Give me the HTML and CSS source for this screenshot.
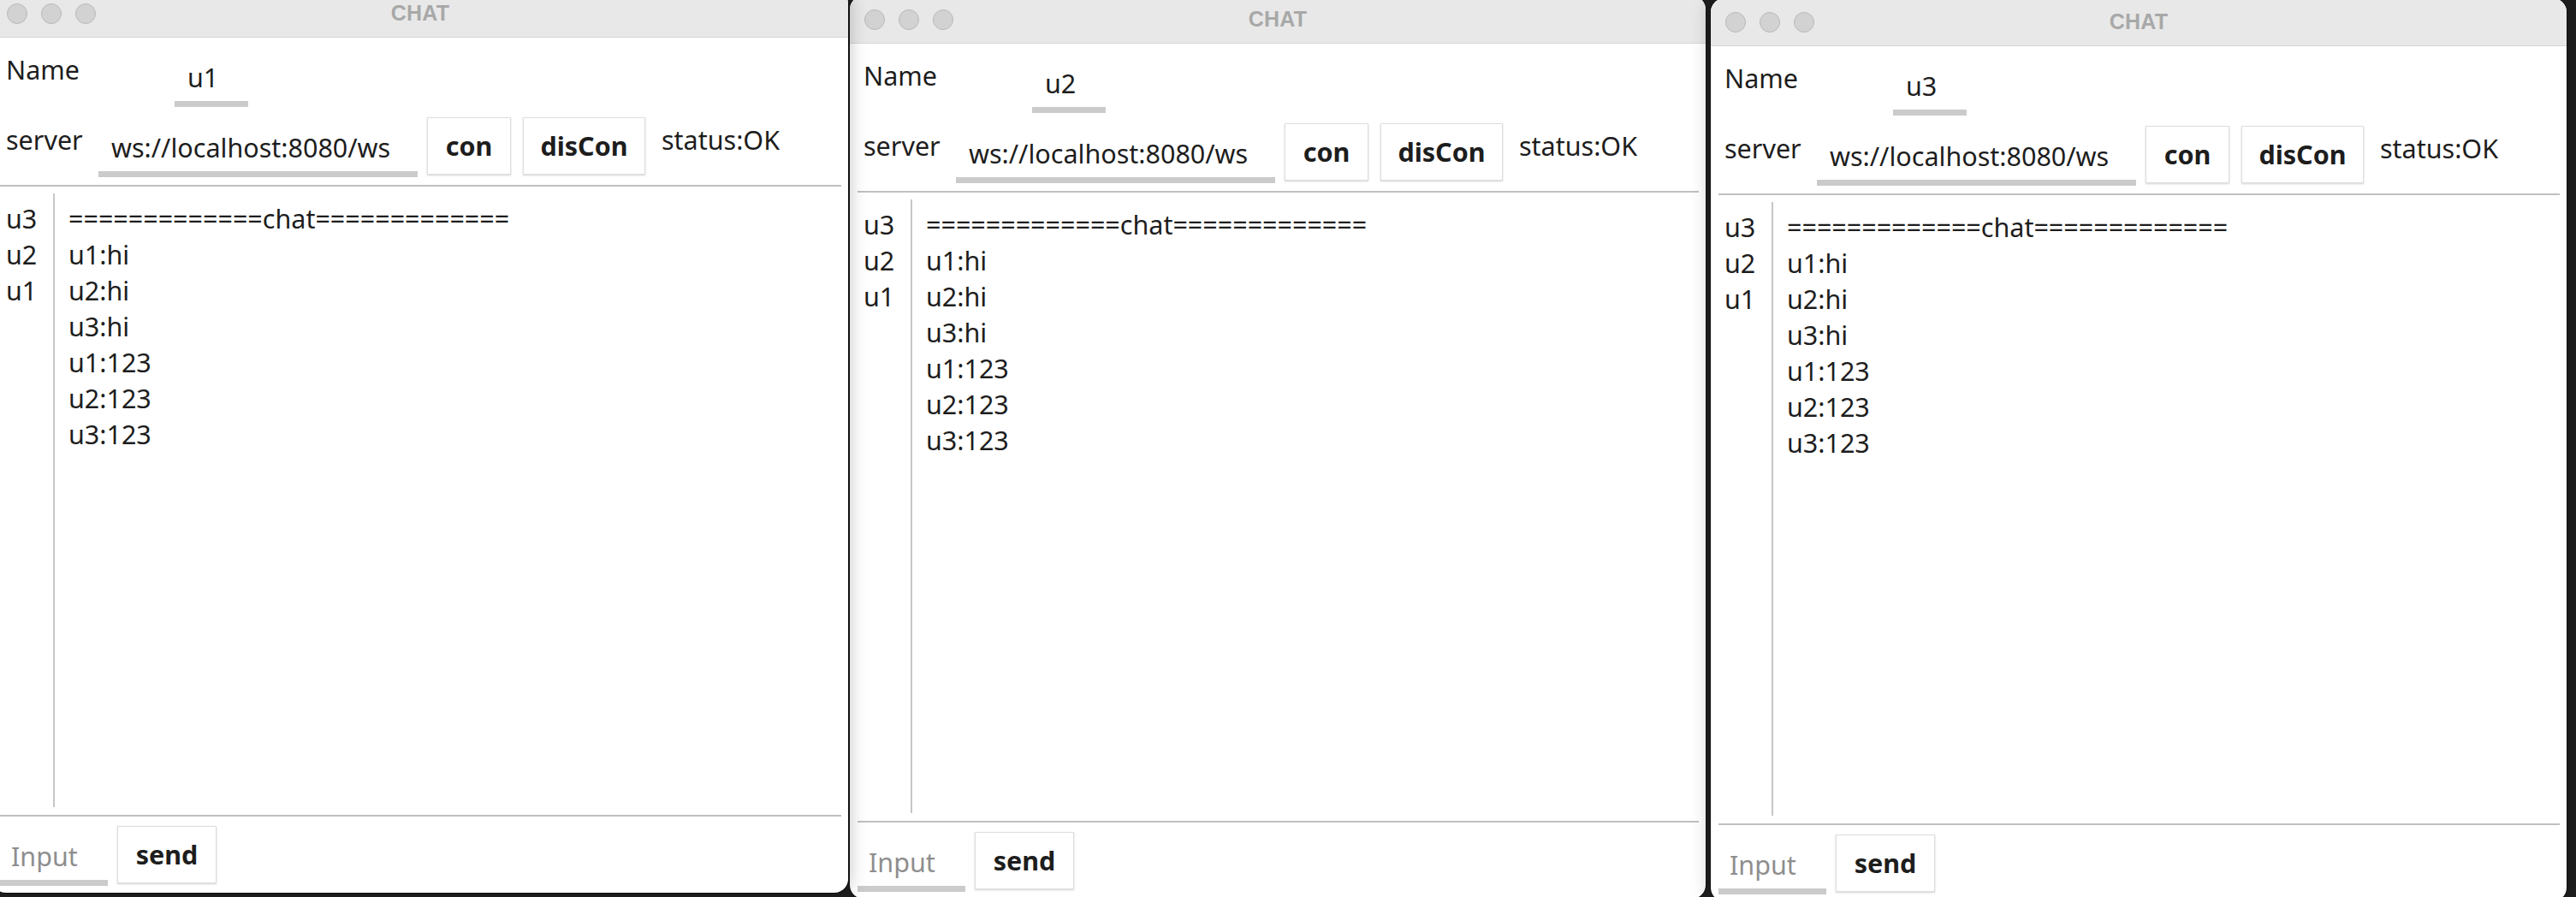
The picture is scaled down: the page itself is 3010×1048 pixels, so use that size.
FILE: index.html
```html
<!DOCTYPE html>
<html lang="en">
<head>
<meta charset="utf-8">
<title>CHAT</title>
<link rel="stylesheet" href="styles.css">
</head>
<body>
<div class="desktop">

  <section class="window w2">
    <header class="titlebar">
      <div class="lights"><span class="light"></span><span class="light"></span><span class="light"></span></div>
      <div class="title">CHAT</div>
      <div></div>
    </header>
    <div class="content">
      <div class="row row-name">
        <div class="label name-label">Name</div>
        <div class="entry entry-name"><div class="entry-text">u2</div><div class="entry-line"></div></div>
      </div>
      <div class="row row-server">
        <div class="label server-label">server</div>
        <div class="entry entry-server"><div class="entry-text">ws://localhost:8080/ws</div><div class="entry-line"></div></div>
        <button class="btn btn-con">con</button>
        <button class="btn btn-dis">disCon</button>
        <div class="label status">status:OK</div>
      </div>
      <div class="sep"></div>
      <div class="chat">
        <div class="members"><div>u3</div><div>u2</div><div>u1</div></div>
        <div class="vdiv"></div>
        <div class="messages">
          <div>=============chat=============</div>
          <div>u1:hi</div><div>u2:hi</div><div>u3:hi</div>
          <div>u1:123</div><div>u2:123</div><div>u3:123</div>
        </div>
      </div>
      <div class="sep"></div>
      <div class="row row-input">
        <div class="entry entry-input"><div class="entry-text placeholder">Input</div><div class="entry-line"></div></div>
        <button class="btn btn-send">send</button>
      </div>
    </div>
  </section>

  <section class="window w1">
    <header class="titlebar">
      <div class="lights"><span class="light"></span><span class="light"></span><span class="light"></span></div>
      <div class="title">CHAT</div>
      <div></div>
    </header>
    <div class="content">
      <div class="row row-name">
        <div class="label name-label">Name</div>
        <div class="entry entry-name"><div class="entry-text">u1</div><div class="entry-line"></div></div>
      </div>
      <div class="row row-server">
        <div class="label server-label">server</div>
        <div class="entry entry-server"><div class="entry-text">ws://localhost:8080/ws</div><div class="entry-line"></div></div>
        <button class="btn btn-con">con</button>
        <button class="btn btn-dis">disCon</button>
        <div class="label status">status:OK</div>
      </div>
      <div class="sep"></div>
      <div class="chat">
        <div class="members"><div>u3</div><div>u2</div><div>u1</div></div>
        <div class="vdiv"></div>
        <div class="messages">
          <div>=============chat=============</div>
          <div>u1:hi</div><div>u2:hi</div><div>u3:hi</div>
          <div>u1:123</div><div>u2:123</div><div>u3:123</div>
        </div>
      </div>
      <div class="sep"></div>
      <div class="row row-input">
        <div class="entry entry-input"><div class="entry-text placeholder">Input</div><div class="entry-line"></div></div>
        <button class="btn btn-send">send</button>
      </div>
    </div>
  </section>

  <section class="window w3">
    <header class="titlebar">
      <div class="lights"><span class="light"></span><span class="light"></span><span class="light"></span></div>
      <div class="title">CHAT</div>
      <div></div>
    </header>
    <div class="content">
      <div class="row row-name">
        <div class="label name-label">Name</div>
        <div class="entry entry-name"><div class="entry-text">u3</div><div class="entry-line"></div></div>
      </div>
      <div class="row row-server">
        <div class="label server-label">server</div>
        <div class="entry entry-server"><div class="entry-text">ws://localhost:8080/ws</div><div class="entry-line"></div></div>
        <button class="btn btn-con">con</button>
        <button class="btn btn-dis">disCon</button>
        <div class="label status">status:OK</div>
      </div>
      <div class="sep"></div>
      <div class="chat">
        <div class="members"><div>u3</div><div>u2</div><div>u1</div></div>
        <div class="vdiv"></div>
        <div class="messages">
          <div>=============chat=============</div>
          <div>u1:hi</div><div>u2:hi</div><div>u3:hi</div>
          <div>u1:123</div><div>u2:123</div><div>u3:123</div>
        </div>
      </div>
      <div class="sep"></div>
      <div class="row row-input">
        <div class="entry entry-input"><div class="entry-text placeholder">Input</div><div class="entry-line"></div></div>
        <button class="btn btn-send">send</button>
      </div>
    </div>
  </section>

</div>
</body>
</html>
```

FILE: styles.css
```css
* { box-sizing: border-box; }

html, body {
  margin: 0;
  padding: 0;
  background: #1f1f1f;
  overflow: hidden;
}

.desktop {
  position: relative;
  width: 3010px;
  height: 1048px;
  overflow: hidden;
  background: #1f1f1f;
  font-family: "Noto Sans", "Open Sans", sans-serif;
  font-size: 30.5px;
  color: #1d1d1d;
}

.window {
  position: absolute;
  width: 1000px;
  height: 1055px;
  background: #ffffff;
  border-radius: 16px;
  overflow: hidden;
  display: flex;
  flex-direction: column;
}

.w1 { left: -9px; top: -12px; z-index: 2; box-shadow: 0 0 0 1px #111, 0 0 22px rgba(0,0,0,0.28); }
.w2 { left: 993px; top: -5px; z-index: 1; box-shadow: 0 0 0 1px #111; }
.w3 { left: 1999px; top: -2px; z-index: 2; box-shadow: 0 0 0 1px #111, 0 0 22px rgba(0,0,0,0.28); }

.titlebar {
  height: 56px;
  flex: none;
  background: #e8e8e8;
  border-bottom: 1px solid #d6d6d6;
  display: grid;
  grid-template-columns: 1fr auto 1fr;
  align-items: center;
}

.lights {
  display: flex;
  gap: 16px;
  padding-left: 17px;
}

.light {
  width: 24px;
  height: 24px;
  border-radius: 50%;
  background: #d2d2d2;
  border: 1px solid #b9b9b9;
}

.title {
  font-family: "Liberation Sans", Arial, sans-serif;
  font-weight: bold;
  font-size: 25px;
  color: #a8a8a8;
  letter-spacing: 0.2px;
}

.content {
  flex: 1;
  display: flex;
  flex-direction: column;
  padding: 0 8px 0 9px;
}

.row {
  display: flex;
  align-items: flex-start;
  flex: none;
}

.row-name { height: 86px; }
.row-server { height: 86px; }
.row-input { height: 89px; }

.label {
  line-height: 42px;
  white-space: nowrap;
}

.name-label { width: 204px; padding-left: 7px; margin-top: 16px; }
.server-label { width: 115px; padding-left: 7px; margin-top: 12px; }
.status { margin-left: 19px; margin-top: 12px; }

.entry { flex: none; }
.entry-text {
  line-height: 42px;
  white-space: nowrap;
  padding-left: 14px;
}
.entry-line {
  height: 7px;
  margin-top: 7px;
  background: #cbcbcb;
}

.entry-name { width: 86px; }
.entry-name .entry-text { padding-top: 25px; padding-left: 15px; }

.entry-server { width: 373px; }
.entry-server .entry-text { padding-top: 21px; padding-left: 15px; }

.entry-input { width: 126px; }
.entry-input .entry-text { padding-top: 25px; padding-left: 13px; }

.placeholder { color: #8e8e8e; }

.btn {
  flex: none;
  height: 67px;
  margin-top: 7px;
  padding: 0;
  background: #ffffff;
  border: 1px solid #dedede;
  box-shadow: 0 1px 2px rgba(0,0,0,0.18);
  font-family: "Noto Sans", "Open Sans", sans-serif;
  font-size: 30.5px;
  font-weight: bold;
  color: #1d1d1d;
  line-height: 65px;
  text-align: center;
}

.btn-con { width: 98px; margin-left: 11px; }
.btn-dis { width: 143px; margin-left: 14px; }
.btn-send { width: 116px; margin-left: 11px; margin-top: 11px; }

.sep {
  height: 2px;
  flex: none;
  background: #c0c0c0;
}

.chat {
  flex: 1;
  display: flex;
  padding: 8px 0 9px 0;
  min-height: 0;
}

.members {
  width: 62px;
  flex: none;
  padding: 8px 0 0 7px;
  line-height: 42px;
}

.vdiv {
  width: 2px;
  flex: none;
  background: #c6c6c6;
}

.messages {
  flex: 1;
  padding: 8px 0 0 16px;
  line-height: 42px;
  white-space: nowrap;
}
```
